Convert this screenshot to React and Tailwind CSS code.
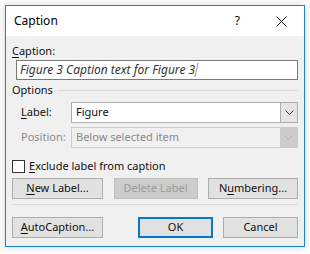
import React from 'react';

const font = { fontFamily: '"Noto Sans", "Open Sans", sans-serif' };

const Chevron = ({ color = '#333' }) => (
  <svg width="9" height="5" viewBox="0 0 9 5" fill="none">
    <path d="M0.5 0.5 L4.5 4.5 L8.5 0.5" stroke={color} strokeWidth="1" />
  </svg>
);

const Btn = ({ children, w = 'w-[91px]', disabled, primary }) => (
  <div
    className={`${w} h-[21px] flex items-center justify-center text-[11px] ${
      disabled
        ? 'bg-[#cccccc] border border-[#bfbfbf] text-[#9b9b9b]'
        : primary
        ? 'bg-[#e1e1e1] border-2 border-[#0078d7] text-[#111]'
        : 'bg-[#e1e1e1] border border-[#adadad] text-[#111]'
    }`}
  >
    {children}
  </div>
);

export default function App() {
  return (
    <div className="w-[310px] h-[254px] bg-white pt-[5px] pl-[5px]" style={font}>
      <div className="w-[300px] h-[242px] border border-[#1883d7] bg-[#f0f0f0] flex flex-col shadow-[0_0_8px_rgba(0,0,0,0.18)]">
        {/* Title bar */}
        <div className="h-[30px] bg-white flex items-center pl-[8px] shrink-0">
          <span className="text-[12px] text-black flex-1">Caption</span>
          <span className="text-[12px] text-black mr-[36px]">?</span>
          <svg width="11" height="11" viewBox="0 0 11 11" className="mr-[17px]">
            <path d="M0.5 0.5 L10.5 10.5 M10.5 0.5 L0.5 10.5" stroke="#111" strokeWidth="1" />
          </svg>
        </div>

        {/* Body */}
        <div className="flex flex-col px-[6px] text-[11px] text-[#111]">
          <div className="mt-[7px] leading-[16px]">
            <span className="underline underline-offset-2">C</span>aption:
          </div>
          <div className="mt-[1px] ml-[4px] h-[20px] bg-white border border-[#7a7a7a] flex items-center pl-[3px] italic text-[12px] text-[#333]">
            Figure 3 Caption text for Figure 3
            <span className="inline-block w-px h-[14px] bg-[#999] -skew-x-12 ml-[1px]" />
          </div>

          <div className="mt-[2px] flex items-center leading-[16px]">
            <span>Options</span>
            <div className="flex-1 h-px bg-[#dcdcdc] ml-[5px]" />
          </div>

          <div className="mt-[4px] flex items-center">
            <span className="ml-[9px] w-[50px]">
              <span className="underline underline-offset-2">L</span>abel:
            </span>
            <div className="flex-1 h-[21px] bg-white border border-[#adadad] flex items-center">
              <span className="flex-1 pl-[4px]">Figure</span>
              <div className="w-[17px] h-full bg-[#e5e5e5] border-l border-[#adadad] flex items-center justify-center">
                <Chevron />
              </div>
            </div>
          </div>

          <div className="mt-[4px] flex items-center text-[#8a8a8a]">
            <span className="ml-[9px] w-[50px]">Position:</span>
            <div className="flex-1 h-[21px] bg-[#f0f0f0] border border-[#cccccc] flex items-center">
              <span className="flex-1 pl-[4px]">Below selected item</span>
              <div className="w-[17px] h-full bg-[#cccccc] flex items-center justify-center">
                <Chevron color="#b0b0b0" />
              </div>
            </div>
          </div>

          <div className="mt-[11px] flex items-center">
            <div className="w-[13px] h-[13px] bg-white border border-[#333]" />
            <span className="ml-[4px] leading-[14px]">
              <span className="underline underline-offset-2">E</span>xclude label from caption
            </span>
          </div>

          <div className="mt-[5px] flex items-center justify-between">
            <Btn>
              <span><span className="underline underline-offset-2">N</span>ew Label...</span>
            </Btn>
            <Btn w="w-[84px]" disabled>Delete Label</Btn>
            <Btn w="w-[90px]">
              <span>N<span className="underline underline-offset-2">u</span>mbering...</span>
            </Btn>
          </div>

          <div className="mt-[5px] h-px bg-[#dcdcdc]" />

          <div className="mt-[12px] flex items-center">
            <Btn>
              <span><span className="underline underline-offset-2">A</span>utoCaption...</span>
            </Btn>
            <div className="ml-[35px]">
              <Btn w="w-[75px]" primary>OK</Btn>
            </div>
            <div className="ml-[10px]">
              <Btn w="w-[75px]">Cancel</Btn>
            </div>
          </div>
        </div>
      </div>
    </div>
  );
}
